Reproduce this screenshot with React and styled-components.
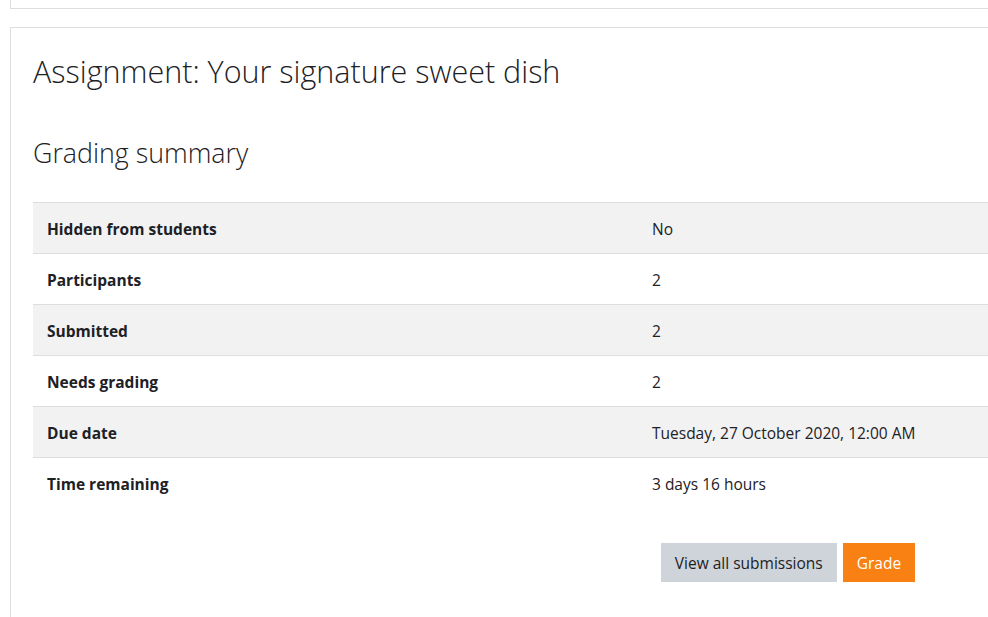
import React from 'react'
import styled, { createGlobalStyle } from 'styled-components'

const GlobalStyle = createGlobalStyle`
    html, body {
        margin: 0;
        padding: 0;
        background: #fff;
        overflow: hidden;
    }
    body {
        font-family: "Open Sans", "Liberation Sans", sans-serif;
        font-size: 15.5px;
        color: #1d2125;
    }
`

const Page = styled.div`
    width: 1566px;
    padding: 0 0 0 10px;
    box-sizing: border-box;
`

const CutCard = styled.div`
    height: 9px;
    border: 1px solid #dedede;
    border-top: none;
    box-sizing: border-box;
    margin-bottom: 18px;
`

const Card = styled.div`
    border: 1px solid #dedede;
    padding: 20px 22px 40px;
`

const Title = styled.h2`
    margin: 0;
    padding-top: 5px;
    font-size: 30.5px;
    font-weight: 300;
    line-height: 1.2;
    color: #1d2125;
`

const SubTitle = styled.h3`
    margin: 47px 0 33px;
    font-size: 26.8px;
    font-weight: 300;
    line-height: 1.2;
    color: #1d2125;
`

const Table = styled.div`
    display: grid;
    grid-template-columns: 607px 1fr;
    border-top: 1px solid #dedede;
`

const Cell = styled.div`
    padding: 15px 12px 13px;
    padding-left: ${p => (p.$label ? '14px' : '12px')};
    line-height: 22px;
    border-bottom: ${p => (p.$last ? 'none' : '1px solid #dedede')};
    background: ${p => (p.$striped ? '#f2f2f2' : '#fff')};
    font-weight: ${p => (p.$label ? 700 : 400)};
`

const Actions = styled.div`
    display: flex;
    justify-content: center;
    gap: 6px;
    margin-top: 35px;
`

const Button = styled.button`
    font-family: inherit;
    font-size: 15.5px;
    line-height: 23px;
    padding: 9px 14px 7px;
    border: none;
    border-radius: 0;
    cursor: pointer;
    color: ${p => (p.$primary ? '#fff' : '#1d2125')};
    background: ${p => (p.$primary ? '#f98012' : '#ced4da')};
`

const rows = [
    ['Hidden from students', 'No'],
    ['Participants', '2'],
    ['Submitted', '2'],
    ['Needs grading', '2'],
    ['Due date', 'Tuesday, 27 October 2020, 12:00 AM'],
    ['Time remaining', '3 days 16 hours'],
]

const App = () => (
    <Page>
        <GlobalStyle />
        <CutCard />
        <Card>
            <Title>Assignment: Your signature sweet dish</Title>
            <SubTitle>Grading summary</SubTitle>
            <Table>
                {rows.map(([label, value], i) => (
                    <React.Fragment key={label}>
                        <Cell $label $striped={i % 2 === 0} $last={i === rows.length - 1}>
                            {label}
                        </Cell>
                        <Cell $striped={i % 2 === 0} $last={i === rows.length - 1}>
                            {value}
                        </Cell>
                    </React.Fragment>
                ))}
            </Table>
            <Actions>
                <Button>View all submissions</Button>
                <Button $primary>Grade</Button>
            </Actions>
        </Card>
    </Page>
)

export default App
